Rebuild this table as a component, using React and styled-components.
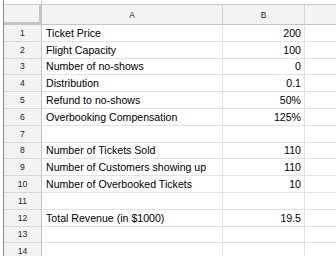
import React from 'react';
import styled, { createGlobalStyle } from 'styled-components';

const GlobalStyle = createGlobalStyle`
    html, body {
        margin: 0;
        padding: 0;
        background: #fff;
        overflow: hidden;
    }
`;

const Sheet = styled.div`
    width: 333px;
    height: 256px;
    margin-left: 3px;
    border-left: 1px solid #8a8a8a;
    font-family: Arial, 'Liberation Sans', sans-serif;
    overflow: hidden;
    background: #fff;
`;

const FormulaStrip = styled.div`
    display: grid;
    grid-template-columns: 38px 1fr;
    height: 4px;
    border-bottom: 1px solid #d0d0d0;
`;

const StripCell = styled.div`
    border-right: ${props => props.$divider ? '1px solid #d0d0d0' : 'none'};
`;

const Grid = styled.div`
    display: grid;
    grid-template-columns: 38px 181px 82px 1fr;
    grid-template-rows: 20px repeat(14, 16.8px);
`;

const Corner = styled.div`
    background: #f3f3f3;
    border-right: 3px solid #c4c4c4;
    border-bottom: 3px solid #c4c4c4;
    box-sizing: border-box;
`;

const ColHeader = styled.div`
    background: #f3f3f3;
    border-right: 1px solid #d4d4d4;
    border-bottom: 1px solid #c4c4c4;
    box-sizing: border-box;
    display: flex;
    align-items: center;
    justify-content: center;
    font-size: 8.4px;
    color: #222;
    padding-top: 1px;
`;

const RowHeader = styled.div`
    background: #f3f3f3;
    border-right: 1px solid #c4c4c4;
    border-bottom: 1px solid #d8d8d8;
    box-sizing: border-box;
    display: flex;
    align-items: center;
    justify-content: center;
    font-size: 8.6px;
    color: #222;
`;

const Cell = styled.div`
    border-right: 1px solid #e2e2e2;
    border-bottom: 1px solid #e2e2e2;
    box-sizing: border-box;
    display: flex;
    align-items: center;
    justify-content: ${props => props.$num ? 'flex-end' : 'flex-start'};
    padding: 0 3px 0 4px;
    font-size: 10.6px;
    color: #000;
    white-space: nowrap;
    overflow: hidden;
`;

const rows = [
    ['Ticket Price', '200'],
    ['Flight Capacity', '100'],
    ['Number of no-shows', '0'],
    ['Distribution', '0.1'],
    ['Refund to no-shows', '50%'],
    ['Overbooking Compensation', '125%'],
    ['', ''],
    ['Number of Tickets Sold', '110'],
    ['Number of Customers showing up', '110'],
    ['Number of Overbooked Tickets', '10'],
    ['', ''],
    ['Total Revenue (in $1000)', '19.5'],
    ['', ''],
    ['', ''],
];

export default function App() {
    return (
        <>
            <GlobalStyle />
            <Sheet>
                <FormulaStrip>
                    <StripCell $divider />
                    <StripCell />
                </FormulaStrip>
                <Grid>
                    <Corner />
                    <ColHeader>A</ColHeader>
                    <ColHeader>B</ColHeader>
                    <ColHeader />
                    {rows.map(([label, value], i) => (
                        <React.Fragment key={i}>
                            <RowHeader>{i + 1}</RowHeader>
                            <Cell>{label}</Cell>
                            <Cell $num>{value}</Cell>
                            <Cell />
                        </React.Fragment>
                    ))}
                </Grid>
            </Sheet>
        </>
    );
}
